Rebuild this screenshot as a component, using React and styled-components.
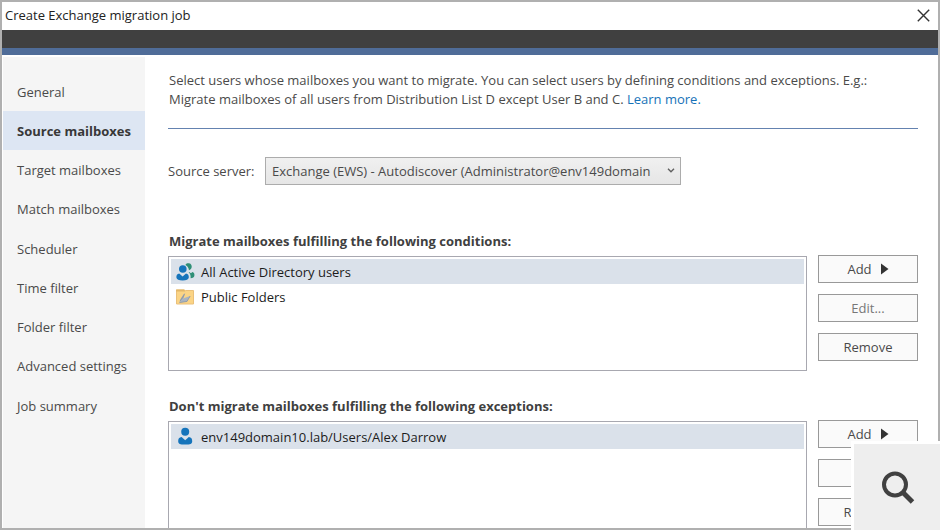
import React from "react";
import styled, { createGlobalStyle } from "styled-components";

const colors = {
  FRAME: "#b0b0b0",
  TOPBAR: "#404040",
  BRAND: "#4f6c98",
  RULE: "#6482b0",
  SIDEBAR: "#f5f5f5",
  SIDEBAR_ACTIVE: "#dde6f3",
  ROW_SELECTED: "#dae1ea",
  TEXT: "#4a4a4a",
  TEXT_DARK: "#1c1c1c",
  LINK: "#1672b8",
  USER_BLUE: "#1574bb",
  USER_GREEN: "#2e8f76",
};

const steps = [
  "General",
  "Source mailboxes",
  "Target mailboxes",
  "Match mailboxes",
  "Scheduler",
  "Time filter",
  "Folder filter",
  "Advanced settings",
  "Job summary",
];

const conditions = [
  { icon: "users", label: "All Active Directory users" },
  { icon: "folder", label: "Public Folders" },
];

const exceptions = [{ icon: "user", label: "env149domain10.lab/Users/Alex Darrow" }];

const renderIcon = (icon) => {
  switch (icon) {
    case "users":
      return (
        <svg width="20" height="20" viewBox="0 0 20 20">
          <g fill={colors.USER_GREEN}>
            <path d="M10.6 2.4C11.6 1 14.6 .8 16 2.4C17.4 4.2 16.8 7.2 14 8.2C13.8 6 12.6 4 10.6 3.2Z" />
            <path d="M14 10L16 11.2L17.4 10C19 10.4 19.6 11.8 19.4 13.6C19.2 15.4 17.8 16.2 15.6 16.2C15.8 14 15.4 11.6 13.8 10.8Z" />
          </g>
          <g fill={colors.USER_BLUE}>
            <circle cx="7.8" cy="7" r="3.8" />
            <path d="M4.2 11.6L7.6 14.4L11 11.6C13 12 14 13.4 13.8 15.6C13.6 17.6 11.4 18.4 7.6 18.4C3.8 18.4 1.6 17.6 1.4 15.6C1.2 13.4 2.2 12 4.2 11.6Z" />
          </g>
        </svg>
      );
    case "folder":
      return (
        <svg width="20" height="20" viewBox="0 0 20 20">
          <path d="M1.5 3H9L10.5 3.5H18.5V17H1.5Z" fill="#fbd485" stroke="#eac07a" />
          <path d="M1 2.5H9L10.4 4.6H1Z" fill="#e3b768" />
          <path d="M5 13L8.8 7L10.2 6.6L8.4 11L4.6 15.4Z" fill="#8f9bad" />
          <path d="M4.4 15.6L7.8 11.4L15.2 9L12 14.4Z" fill="#a9b4c2" />
          <path d="M4.4 15.6L12 14.4L15.2 9" fill="none" stroke="#8794a8" strokeWidth=".8" />
        </svg>
      );
    default:
      return (
        <svg width="20" height="20" viewBox="0 0 20 20">
          <g fill={colors.USER_BLUE}>
            <circle cx="10.2" cy="4.8" r="4" />
            <path d="M6.6 10L10.2 13.2L13.8 10C16.2 10.2 17.4 11.8 17.2 14.4C17 16.8 15.6 17.6 10.2 17.6C4.8 17.6 3.4 16.8 3.2 14.4C3 11.8 4.2 10.2 6.6 10Z" />
          </g>
        </svg>
      );
  }
};

const RuleSection = ({ title, items }) => (
  <Section>
    <SectionTitle>{title}</SectionTitle>
    <SectionBody>
      <ListBox>
        {items.map((item, i) => (
          <ListRow key={item.label} $selected={i === 0}>
            {renderIcon(item.icon)}
            {item.label}
          </ListRow>
        ))}
      </ListBox>
      <Actions>
        <Button type="button">
          Add
          <svg width="8" height="12" viewBox="0 0 8 12">
            <path d="M0 .5L7.5 6L0 11.5Z" fill="#333" />
          </svg>
        </Button>
        <Button type="button" disabled>
          Edit...
        </Button>
        <Button type="button">Remove</Button>
      </Actions>
    </SectionBody>
  </Section>
);

const App = () => (
  <>
    <GlobalStyle />
    <Window>
      <TitleBar>
        <Title>Create Exchange migration job</Title>
        <CloseButton type="button" aria-label="Close">
          <svg width="13" height="13" viewBox="0 0 13 13">
            <path d="M.8 .8L12.2 12.2M12.2 .8L.8 12.2" stroke="#333" strokeWidth="1.4" />
          </svg>
        </CloseButton>
      </TitleBar>
      <Banner />
      <Body>
        <Sidebar>
          <StepList>
            {steps.map((step) => (
              <Step key={step}>
                <StepButton type="button" $active={step === "Source mailboxes"}>
                  {step}
                </StepButton>
              </Step>
            ))}
          </StepList>
        </Sidebar>
        <Content>
          <Intro>
            Select users whose mailboxes you want to migrate. You can select users by defining
            conditions and exceptions. E.g.:
            <br />
            Migrate mailboxes of all users from Distribution List D except User B and C.{" "}
            <Link href="#learn-more">Learn more.</Link>
          </Intro>
          <Divider />
          <Field>
            <Label htmlFor="server">Source server:</Label>
            <SelectWrap>
              <Select id="server">
                <option>Exchange (EWS) - Autodiscover (Administrator@env149domain</option>
              </Select>
              <Caret width="8" height="5" viewBox="0 0 8 5">
                <path d="M1 .8L4 3.8L7 .8" fill="none" stroke="#606060" strokeWidth="1.4" />
              </Caret>
            </SelectWrap>
          </Field>
          <RuleSection
            title="Migrate mailboxes fulfilling the following conditions:"
            items={conditions}
          />
          <RuleSection
            title="Don't migrate mailboxes fulfilling the following exceptions:"
            items={exceptions}
          />
        </Content>
      </Body>
    </Window>
    <ZoomButton type="button" aria-label="Zoom">
      <svg width="36" height="36" viewBox="0 0 36 36">
        <circle cx="16" cy="15.5" r="11" fill="none" stroke="#404040" strokeWidth="4" />
        <path d="M23.5 23L33.5 33" stroke="#404040" strokeWidth="5" />
      </svg>
    </ZoomButton>
  </>
);

const GlobalStyle = createGlobalStyle`
  * {
    box-sizing: border-box;
  }

  body {
    margin: 0;
    background: #fff;
  }

  body,
  button,
  select {
    font-family: "Open Sans", "Noto Sans", sans-serif;
    font-size: 13px;
    color: ${colors.TEXT};
  }
`;

const Window = styled.div`
  display: flex;
  flex-direction: column;
  height: 100vh;
  border: 2px solid ${colors.FRAME};
  background: #fff;
  overflow: hidden;
`;

const TitleBar = styled.header`
  display: flex;
  flex-shrink: 0;
  align-items: center;
  justify-content: space-between;
  height: 28px;
  padding: 0 8px 2px 3px;
`;

const Title = styled.h1`
  margin: 0;
  font-size: 13px;
  font-weight: 400;
  color: #222;
`;

const CloseButton = styled.button`
  display: flex;
  padding: 0;
  border: 0;
  background: none;
`;

const Banner = styled.div`
  flex-shrink: 0;
  height: 25px;
  background: ${colors.TOPBAR};
  border-bottom: 7px solid ${colors.BRAND};
`;

const Body = styled.div`
  display: flex;
  flex: 1;
  min-height: 0;
  padding: 2px 0 0 1px;
`;

const Sidebar = styled.nav`
  flex-shrink: 0;
  width: 142px;
  padding-top: 15px;
  background: ${colors.SIDEBAR};
`;

const StepList = styled.ul`
  display: grid;
  grid-auto-rows: 39px;
  align-content: space-between;
  height: 353px;
  margin: 0;
  padding: 0;
  list-style: none;
`;

const Step = styled.li`
  display: flex;
`;

const StepButton = styled.button`
  width: 100%;
  padding: 0 0 0 14px;
  border: 0;
  text-align: left;
  white-space: nowrap;
  font-weight: ${(props) => (props.$active ? 700 : 400)};
  color: ${(props) => (props.$active ? "#383838" : colors.TEXT)};
  background: ${(props) => (props.$active ? colors.SIDEBAR_ACTIVE : "transparent")};
`;

const Content = styled.main`
  flex: 1;
  min-width: 0;
  padding: 14px 20px 0 23px;
`;

const Intro = styled.p`
  margin: 0;
  padding-left: 1px;
  line-height: 19px;
  white-space: nowrap;
`;

const Link = styled.a`
  color: ${colors.LINK};
  text-decoration: none;
`;

const Divider = styled.hr`
  height: 1px;
  margin: 19px 0 28px;
  border: 0;
  background: ${colors.RULE};
`;

const Field = styled.div`
  display: flex;
  align-items: center;
  margin-bottom: 44px;
`;

const Label = styled.label`
  width: 97px;
`;

const SelectWrap = styled.div`
  position: relative;
  width: 416px;
`;

const Select = styled.select`
  display: block;
  width: 100%;
  height: 28px;
  padding: 0 20px 0 6px;
  border: 1px solid #acacac;
  border-radius: 0;
  appearance: none;
  background: linear-gradient(#f0f0f0, #e6e6e6);
`;

const Caret = styled.svg`
  position: absolute;
  top: 11px;
  right: 6px;
  pointer-events: none;
`;

const Section = styled.section`
  margin-bottom: 23px;
`;

const SectionTitle = styled.h2`
  margin: 0 0 2px;
  padding-left: 1px;
  font-size: 13px;
  line-height: 24px;
  font-weight: 700;
  color: #404040;
`;

const SectionBody = styled.div`
  display: flex;
  gap: 11px;
`;

const ListBox = styled.ul`
  flex: 1;
  margin: 1px 0 0;
  padding: 2px;
  min-height: 115px;
  border: 1px solid #a8a8b0;
  list-style: none;
`;

const ListRow = styled.li`
  display: flex;
  align-items: center;
  gap: 6px;
  height: 25px;
  padding-left: 4px;
  color: ${colors.TEXT_DARK};
  background: ${(props) => (props.$selected ? colors.ROW_SELECTED : "transparent")};
`;

const Actions = styled.div`
  display: flex;
  flex-direction: column;
  gap: 11px;
  width: 100px;
`;

const Button = styled.button`
  display: flex;
  align-items: center;
  justify-content: center;
  gap: 9px;
  height: 28px;
  padding: 0;
  border: 1px solid #999;
  background: #fafafa;

  &:disabled {
    color: #777;
  }
`;

const ZoomButton = styled.button`
  position: fixed;
  right: 0;
  bottom: 0;
  display: flex;
  align-items: center;
  justify-content: center;
  width: 89px;
  height: 89px;
  padding: 0;
  border: solid #fff;
  border-width: 3px 0 0 3px;
  background: #eee;
`;

export default App;
